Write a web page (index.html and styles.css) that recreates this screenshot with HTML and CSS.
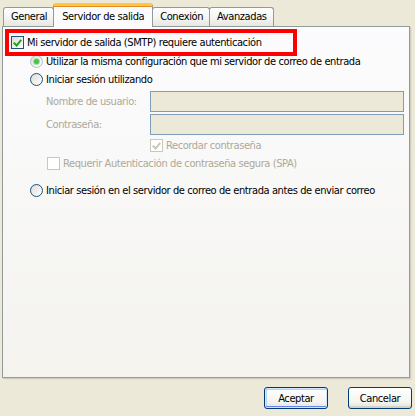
FILE: index.html
```html
<!DOCTYPE html>
<html lang="es">
<head>
    <meta charset="UTF-8">
    <title>Configuración de correo electrónico de Internet</title>
    <link rel="stylesheet" href="styles.css">
</head>
<body>
    <div class="dialog">
        <!-- Tabs -->
        <div class="tabs">
            <div class="tab tab-first">General</div>
            <div class="tab tab-active">Servidor de salida</div>
            <div class="tab">Conexión</div>
            <div class="tab">Avanzadas</div>
        </div>

        <div class="panel">
            <div class="highlight">
                <label class="row">
                    <span class="check checked"></span>
                    <span>Mi servidor de salida (SMTP) requiere autenticación</span>
                </label>
            </div>

            <label class="row radio-row first-radio">
                <span class="radio selected faded"></span>
                <span>Utilizar la misma configuración que mi servidor de correo de entrada</span>
            </label>
            <label class="row radio-row">
                <span class="radio"></span>
                <span>Iniciar sesión utilizando</span>
            </label>

            <div class="field-row">
                <span class="field-label">Nombre de usuario:</span>
                <span class="field"></span>
            </div>
            <div class="field-row">
                <span class="field-label">Contraseña:</span>
                <span class="field"></span>
            </div>

            <label class="row remember disabled">
                <span class="check checked off"></span>
                <span>Recordar contraseña</span>
            </label>
            <label class="row spa disabled">
                <span class="check off"></span>
                <span>Requerir Autenticación de contraseña segura (SPA)</span>
            </label>

            <label class="row radio-row last-radio">
                <span class="radio"></span>
                <span>Iniciar sesión en el servidor de correo de entrada antes de enviar correo</span>
            </label>
        </div>

        <div class="buttons">
            <button class="btn btn-default">Aceptar</button>
            <button class="btn">Cancelar</button>
        </div>
    </div>
</body>
</html>
```

FILE: styles.css
```css
/* General Styles */
body {
    margin: 0;
    background-color: #ece9d8;
    font-family: "DejaVu Sans Condensed", "DejaVu Sans", sans-serif;
    font-size: 11px;
    letter-spacing: -0.4px;
    color: #000000;
}

.dialog {
    width: 415px;
    height: 416px;
    padding: 3px 0 0 2px;
    box-sizing: border-box;
}

/* Tabs */
.tabs {
    display: flex;
    align-items: flex-end;
    height: 23px;
    padding-left: 1px;
    position: relative;
    z-index: 1;
}

.tab {
    height: 18px;
    line-height: 18px;
    padding: 0 6px 0 7px;
    margin-left: -1px;
    border: 1px solid #919b9c;
    border-bottom: none;
    border-radius: 3px 3px 0 0;
    background: linear-gradient(#ffffff, #f3f3ef 60%, #e7e6df);
    white-space: nowrap;
}

.tab-first {
    margin-left: 0;
}

.tab-active {
    height: 21px;
    line-height: 21px;
    margin-bottom: -1px;
    padding: 0 8px;
    border-top: 3px solid #ffc83c;
    border-radius: 3px 3px 0 0;
    background: #fcfcfe;
    box-shadow: inset 0 1px 0 #e68b2c;
}

/* Panel */
.panel {
    width: 408px;
    height: 352px;
    box-sizing: border-box;
    border: 1px solid #919b9c;
    background: linear-gradient(#fcfcfe, #f4f3ee);
    box-shadow: 1px 1px 0 #d0cebf, 2px 2px 0 #e3e0d0;
    padding: 2px 0 0 2px;
}

.highlight {
    width: 292px;
    height: 27px;
    box-sizing: border-box;
    border: 4px solid #ff0000;
    padding: 0 0 0 2px;
    display: flex;
    align-items: center;
    position: relative;
    z-index: 1;
}

.row {
    display: flex;
    align-items: center;
    height: 18px;
    white-space: nowrap;
}

.row > span + span {
    margin-left: 3px;
}

.check {
    width: 11px;
    height: 11px;
    border: 1px solid #1c5180;
    background: linear-gradient(135deg, #dcdcd7, #ffffff);
    position: relative;
    flex: none;
}

.check.checked::after {
    content: "";
    position: absolute;
    left: 3px;
    top: 1px;
    width: 3px;
    height: 6px;
    border: solid #21a121;
    border-width: 0 2px 2px 0;
    transform: rotate(40deg);
}

.check.off {
    border-color: #cac8bb;
    background: #ffffff;
}

.check.off.checked::after {
    border-color: #cac8bb;
}

.radio {
    width: 11px;
    height: 11px;
    border: 1px solid #1c5180;
    border-radius: 50%;
    background: linear-gradient(135deg, #dcdcd7, #ffffff);
    position: relative;
    flex: none;
}

.radio.faded {
    border-color: #a8bfd6;
}

.radio.selected::after {
    content: "";
    position: absolute;
    left: 3px;
    top: 3px;
    width: 5px;
    height: 5px;
    border-radius: 50%;
    background: #4dbf4d;
    box-shadow: 0 0 0 1px #a6e0a6;
}

.radio-row {
    margin-left: 25px;
}

.first-radio {
    margin-top: -4px;
}

.field-row {
    display: flex;
    align-items: center;
    margin-top: 3px;
    height: 21px;
}

.field-row + .field-row {
    margin-top: 2px;
}

.field-label {
    width: 104px;
    padding-left: 41px;
    color: #aca899;
    flex: none;
}

.field {
    width: 254px;
    height: 21px;
    box-sizing: border-box;
    border: 1px solid #7f9db9;
    background-color: #ece9d8;
}

.disabled {
    color: #aca899;
}

.remember {
    margin: 1px 0 0 145px;
}

.spa {
    margin: 0 0 0 42px;
}

.last-radio {
    margin-top: 9px;
}

/* Buttons */
.buttons {
    display: flex;
    justify-content: flex-end;
    gap: 20px;
    padding: 9px 3px 0 0;
}

.btn {
    width: 64px;
    height: 22px;
    font-family: inherit;
    font-size: 11px;
    letter-spacing: inherit;
    color: #000000;
    border: 1px solid #003c74;
    border-radius: 3px;
    background: linear-gradient(#ffffff, #f4f4f0 70%, #e3e2da);
    box-shadow: inset 0 -2px 0 #d6d0c5;
    padding: 0;
}

.btn-default {
    box-shadow: inset 0 0 0 1px #cee7ff, inset 0 -2px 0 #6982ee, inset 1px 1px 0 1px #bcd4f6;
}
```
